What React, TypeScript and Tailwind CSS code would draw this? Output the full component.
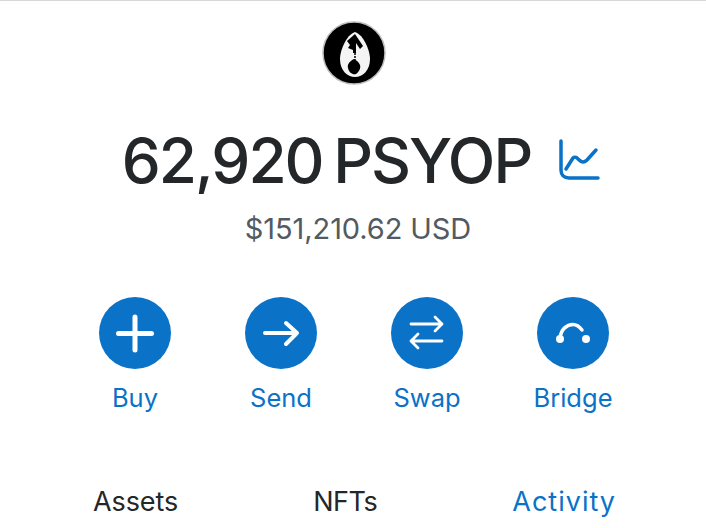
import React from 'react';

const actions = [
  {
    label: 'Buy',
    icon: (
      <path d="M36 20V53M19.5 36.5H52.5" stroke="white" strokeWidth="5" strokeLinecap="round" fill="none" />
    ),
  },
  {
    label: 'Send',
    icon: (
      <path d="M20 36H52M41 26L52 36L41 47" stroke="white" strokeWidth="4" strokeLinecap="round" strokeLinejoin="round" fill="none" />
    ),
  },
  {
    label: 'Swap',
    icon: (
      <path d="M20 27H51M44 20L51 27L44 34M51 44H20M27 37L20 44L27 51" stroke="white" strokeWidth="2.8" strokeLinecap="round" strokeLinejoin="round" fill="none" />
    ),
  },
  {
    label: 'Bridge',
    icon: (
      <>
        <path d="M23 41C24 32 30 27.5 36 27.5C39 27.5 42 29 45 33" stroke="white" strokeWidth="3.5" strokeLinecap="round" fill="none" />
        <circle cx="23" cy="42" r="4" fill="white" />
        <circle cx="49" cy="42" r="4" fill="white" />
      </>
    ),
  },
];

const Logo = () => (
  <svg width="64" height="64" viewBox="0 0 64 64" className="block">
    <circle cx="32" cy="32" r="31" fill="black" stroke="#bdbdbd" strokeWidth="1.5" />
    <path d="M33 11C24 14 18 30 18 38C18 49 25 56 33 56C41 56 48 49 48 38C48 30 42 14 33 11Z" fill="#f4f4f4" />
    <path d="M33 13L25 20L28 24L26 27L31 29V32H34V22L38 28L41 25L37 19Z" fill="black" />
    <path d="M33 32V39" stroke="black" strokeWidth="1.5" strokeDasharray="2 1" />
    <path d="M32 38C28 40 25 43 26 47C27 52 31 54 34 53C37 51 39 47 38 44C37 41 34 39 32 38Z" fill="black" />
  </svg>
);

export default function App() {
  return (
    <div className="flex h-[528px] w-[706px] flex-col items-center overflow-hidden border-t border-[#d6d9dc] bg-white font-['Inter',sans-serif]">
      <div className="mt-[20px] ml-[2px]">
        <Logo />
      </div>

      <div className="mt-[38px] flex items-center pl-[18px]">
        <h1 className="text-[62px] leading-[76px] font-medium tracking-[-2px] [word-spacing:-4px] whitespace-nowrap text-[#24272a]">
          62,920 PSYOP
        </h1>
        <svg width="44" height="44" viewBox="0 0 44 44" fill="none" className="ml-[27px]">
          <path d="M3 2V31C3 36 6 39 11 39H40" stroke="#0a72c7" strokeWidth="3.5" strokeLinecap="round" />
          <path d="M8 30L15 19C16 18 18 18 19 19C21 21 23 23 25 23C27 23 28 22 29 21L38 11" stroke="#0a72c7" strokeWidth="3.5" strokeLinecap="round" strokeLinejoin="round" />
        </svg>
      </div>

      <p className="mt-[12px] ml-[10px] text-[29px] leading-[36px] tracking-[-0.1px] whitespace-nowrap text-[#535a61]">$151,210.62 USD</p>

      <div className="mt-[50px] ml-[2px] flex gap-[74px]">
        {actions.map((action) => (
          <div key={action.label} className="flex w-[72px] flex-col items-center">
            <div className="flex h-[72px] w-[72px] items-center justify-center rounded-full bg-[#0a72c7]">
              <svg width="72" height="72" viewBox="0 0 72 72">
                {action.icon}
              </svg>
            </div>
            <span className="mt-[14px] text-[25.5px] leading-[30px] whitespace-nowrap text-[#0a72c7]">{action.label}</span>
          </div>
        ))}
      </div>

      <div className="mt-[72px] flex w-full justify-between pr-[90px] pl-[93px] text-[27px] leading-[34px]">
        <span className="tracking-[-0.1px] text-[#24272a]">Assets</span>
        <span className="tracking-[-0.5px] text-[#24272a]">NFTs</span>
        <span className="tracking-[1px] text-[#0a72c7]">Activity</span>
      </div>
    </div>
  );
}
